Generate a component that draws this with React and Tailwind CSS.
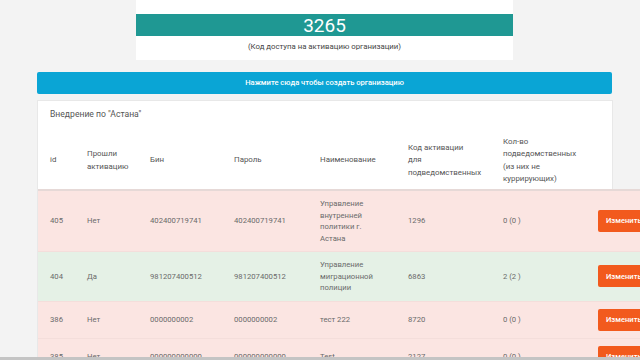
import React from 'react';

const rows = [
  { id: '405', done: 'Нет', bin: '402400719741', pass: '402400719741', name: ['Управление', 'внутренней', 'политики г.', 'Астана'], code: '1296', count: '0 (0 )', ok: false },
  { id: '404', done: 'Да', bin: '981207400512', pass: '981207400512', name: ['Управление', 'миграционной', 'полиции'], code: '6863', count: '2 (2 )', ok: true },
  { id: '386', done: 'Нет', bin: '0000000002', pass: '0000000002', name: ['тест 222'], code: '8720', count: '0 (0 )', ok: false },
  { id: '385', done: 'Нет', bin: '000000000000', pass: '000000000000', name: ['Test'], code: '2127', count: '0 (0 )', ok: false },
];

const cols = ['w-[37px]', 'w-[63px]', 'w-[84px]', 'w-[86px]', 'w-[88px]', 'w-[95px]', 'w-[95px]', 'w-[80px]'];

const App = () => {
  return (
    <div className="relative w-[640px] h-[360px] overflow-hidden bg-[#f3f3f3] font-['Roboto',sans-serif]">
      {/* Access code card */}
      <div className="ml-[136px] w-[377px] h-[60px] bg-white pt-[14px]">
        <div className="h-[22px] bg-[#1f9893] flex items-center justify-center text-white text-[19px] leading-none">
          3265
        </div>
        <p className="text-center text-[7.8px] text-[#444] mt-[5px]">(Код доступа на активацию организации)</p>
      </div>

      {/* Create button */}
      <button className="block mt-[12px] ml-[37px] w-[575px] h-[22px] rounded-[2px] bg-[#0aa5d5] text-white text-[7.6px] font-medium">
        Нажмите сюда чтобы создать организацию
      </button>

      {/* Table panel */}
      <div className="mt-[6px] ml-[37px] w-[576px] bg-white border border-[#e8e8e8] h-[300px]">
        <div className="pl-[12px] pt-[7px] h-[30px] text-[8.6px] text-[#555]">Внедрение по "Астана"</div>
        <table className="table-fixed border-collapse w-[628px] text-[7.7px] text-[#6a6a6a]">
          <thead>
            <tr className="border-b-2 border-[#e6d9d7] text-[#555] text-[7.9px] leading-[12.5px]">
              {[
                ['id'],
                ['Прошли', 'активацию'],
                ['Бин'],
                ['Пароль'],
                ['Наименование'],
                ['Код активации', 'для', 'подведомственных'],
                ['Кол-во', 'подведомственных', '(из них не', 'куррирующих)'],
                [''],
              ].map((h, i) => (
                <th key={i} className={`${cols[i]} pl-[12px] pt-[4px] pb-[3px] h-[59px] text-left font-normal align-middle whitespace-nowrap`}>
                  {h.map((l, j) => (
                    <div key={j}>{l}</div>
                  ))}
                </th>
              ))}
            </tr>
          </thead>
          <tbody>
            {rows.map((r) => (
              <tr key={r.id} className={`${r.ok ? 'bg-[#e5f1e6]' : 'bg-[#fbe5e2]'} border-t border-[#f4dedb] leading-[11.5px]`}>
                <td className="pl-[12px] py-[7px] align-middle">{r.id}</td>
                <td className="pl-[12px] py-[7px] align-middle">{r.done}</td>
                <td className="pl-[12px] py-[7px] align-middle">{r.bin}</td>
                <td className="pl-[12px] py-[7px] align-middle">{r.pass}</td>
                <td className="pl-[12px] py-[7px] align-middle whitespace-nowrap">
                  {r.name.map((l, j) => (
                    <div key={j}>{l}</div>
                  ))}
                </td>
                <td className="pl-[12px] py-[7px] align-middle">{r.code}</td>
                <td className="pl-[12px] py-[7px] align-middle">{r.count}</td>
                <td className="pl-[12px] py-[7px] align-middle">
                  <button className="h-[22px] px-[8px] rounded-[2px] bg-[#f25a1d] text-white text-[7.6px] font-medium">
                    Изменить
                  </button>
                </td>
              </tr>
            ))}
          </tbody>
        </table>
      </div>

      {/* bottom strip */}
      <div className="absolute left-0 bottom-0 w-full h-[3px] bg-[#c4c4c4]" />
    </div>
  );
};

export default App;
